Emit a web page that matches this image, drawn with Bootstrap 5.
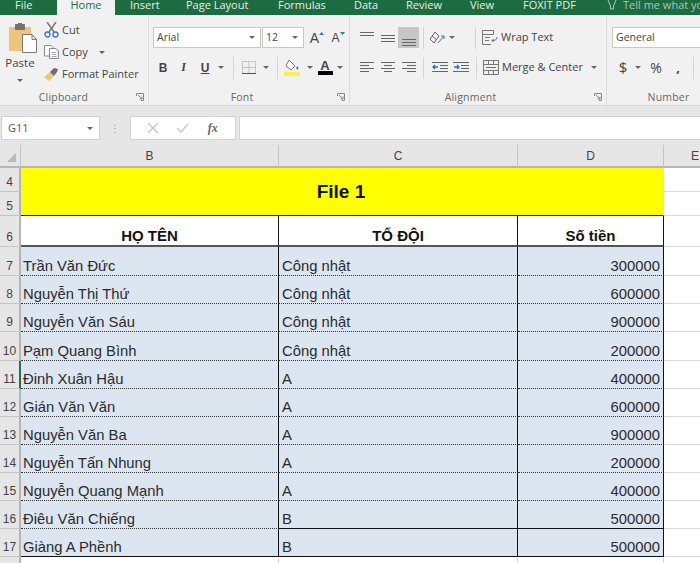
<!DOCTYPE html>
<html lang="vi">

<head>
  <meta charset="UTF-8" />
  <meta name="viewport" content="width=device-width, initial-scale=1" />
  <title>File 1</title>
  <link href="https://cdn.jsdelivr.net/npm/bootstrap@5.3.3/dist/css/bootstrap.min.css" rel="stylesheet">
  <style>
    body { width: 700px; height: 563px; overflow: hidden; background: #fff; font-family: "Open Sans", "Liberation Sans", sans-serif; font-size: 11px; color: #444; }

    /* spacing helpers */
    .sw-6 { width: 6px; } .sw-10 { width: 10px; } .sw-12 { width: 12px; } .sw-14 { width: 14px; } .sw-16 { width: 16px; }
    .sw-18 { width: 18px; } .sw-20 { width: 20px; } .sw-21 { width: 21px; } .sw-22 { width: 22px; } .sw-24 { width: 24px; }
    .sw-25 { width: 25px; } .sw-26 { width: 26px; } .sw-29 { width: 29px; } .sw-42 { width: 42px; } .sw-108 { width: 108px; } .sw-110 { width: 110px; }
    .ml-1 { margin-left: 1px; } .ml-3 { margin-left: 3px; } .ml-4 { margin-left: 4px; } .ml-6 { margin-left: 6px; } .ml-7 { margin-left: 7px; } .ml-8 { margin-left: 8px; } .ml-20 { margin-left: 20px; }

    /* tabs */
    .tabbar { height: 15px; background: #1d6b40; color: #e4efe8; overflow: hidden; font-size: 11px; line-height: 10px; }
    .tabbar span { display: block; flex: none; white-space: nowrap; }
    .tab-file { margin-left: 15px; width: 42px; }
    .tab-home { background: #f1f1f1; color: #1d6b40; width: 58px; height: 15px; text-align: center; }
    .tab-insert { margin-left: 15px; width: 56px; }
    .tab-layout { width: 92px; }
    .tab-formulas { width: 76px; }
    .tab-data { width: 52px; }
    .tab-review { width: 64px; }
    .tab-view { width: 53px; }
    .tab-foxit { width: 84px; }
    .tab-tell { color: #a9c8b6; }
    .tab-tell svg { margin-right: 6px; }

    /* ribbon */
    .ribbon { height: 91px; background: #f1f1f1; border-bottom: 1px solid #d8d8d8; }
    .rgroup { flex: none; height: 90px; border-right: 1px solid #dcdcdc; position: relative; }
    .rg-clip { width: 149px; }
    .rg-font { width: 201px; padding: 12px 0 0 4px; }
    .rg-align { width: 257px; padding: 12px 0 0 5px; }
    .rg-num { flex: 1; padding: 12px 0 0 5px; border-right: 0; overflow: hidden; }
    .rlabel { position: absolute; left: 0; right: 0; top: 75px; text-align: center; color: #666; font-size: 10.5px; line-height: 14px; letter-spacing: .2px; }
    .lb-clip { padding-right: 21px; }
    .lb-font { padding-right: 14px; }
    .lb-align { padding-right: 15px; }
    .lb-num { padding-left: 30px; }
    .launch { position: absolute; right: 4px; top: 78px; display: block; }
    .caret-d { flex: none; width: 0; height: 0; border: 3px solid transparent; border-top-color: #666; border-bottom: 0; }
    .sep { flex: none; width: 1px; height: 22px; background: #d4d4d4; }
    .slot { flex: none; height: 21px; display: flex; align-items: center; justify-content: center; color: #444; }
    .combo { flex: none; height: 21px; background: #fff; border: 1px solid #c8c8c8; padding: 0 5px 0 3px; color: #444; font-size: 10.5px; }
    .combo-size { margin-left: 1px; }
    .grow-a { font: 14px "Liberation Sans", sans-serif; }
    .shrink-a { font: 12px "Liberation Sans", sans-serif; }
    .rrow { height: 21px; flex-wrap: nowrap; }
    .rrow2 { margin-top: 9px; }
    .paste-col { width: 40px; padding-top: 8px; color: #444; }
    .paste-ico { margin-left: 3px; }
    .paste-txt { font-size: 11.5px; line-height: 16px; }
    .clip-col { font-size: 11px; padding-top: 4px; margin-left: 4px; color: #444; white-space: nowrap; }
    .clip-col > div { height: 22px; gap: 3px; }
    .fmt-b { font: bold 12px "Liberation Sans", sans-serif; color: #444; }
    .fmt-i { font-family: "Liberation Serif", serif; font-style: italic; }
    .font-a { font-size: 13px; line-height: 11px; }
    .font-bar { display: block; width: 15px; height: 4px; background: #000; }
    .align-on { background: #c6c6c6; }
    .wrap-txt { font-size: 11px; color: #444; white-space: nowrap; align-self: center; }
    .num-dollar { font-size: 15px; }
    .num-pct { font-size: 14px; }
    .num-comma { font-size: 13px; font-weight: bold; }

    /* formula bar */
    .fbar { height: 39px; background: #e6e6e6; padding: 10px 0 0 1px; }
    .fbox { flex: none; height: 24px; background: #fff; border: 1px solid #d2d2d2; color: #555; }
    .fname { width: 99px; padding: 0 6px; font-size: 11px; }
    .fdots { flex: none; width: 30px; text-align: center; color: #9a9a9a; font-size: 10px; line-height: 24px; }
    .ffn { width: 106px; }
    .fx-txt { font: italic bold 12px "Liberation Serif", serif; color: #666; }
    .finput { flex: 1; margin-left: 3px; border-right: 0; }

    /* sheet */
    .sheet { table-layout: fixed; border-collapse: separate; border-spacing: 0; width: 700px; font-family: "Liberation Sans", Arial, sans-serif; font-size: 14.800px; color: #2b2b2b; }
    .sheet td { padding: 0; overflow: hidden; white-space: nowrap; font-weight: normal; }
    .c-rh { width: 21px; } .c-b { width: 258px; } .c-c { width: 239px; } .c-d { width: 146px; } .c-e { width: 36px; }
    .col-head td { height: 23px; background: #e6e6e6; border-right: 1px solid #c4c4c4; border-bottom: 2px solid #b5b5b5; text-align: center; font-size: 12px; color: #444; line-height: 20px; }
    .col-head .col-e { border-right: 0; text-align: left; padding-left: 27px; }
    .sheet .rh { background: #e6e6e6; border-right: 2px solid #b5b5b5; border-bottom: 1px solid #c4c4c4; text-align: center; vertical-align: bottom; font-size: 12px; line-height: 18px; color: #444; }
    .sheet .rh.rh-on { border-right-color: #217346; }
    .sheet .rh.rh-cut { vertical-align: top; padding-top: 4px; border-bottom: 0; }
    .corner { position: relative; }
    .corner svg { position: absolute; left: 7px; top: 8px; }
    .r24 { height: 24px; }
    .r31 { height: 31px; }
    .r28 { height: 28px; }
    .r29 { height: 29px; }
    .r-last { height: 7px; }
    .sheet .title-cell { background: #ff0; border-bottom: 1px solid #111; text-align: center; font-weight: bold; font-size: 19px; color: #111; border-right: 1px solid #ddd; padding: 1px 2px 0 0; }
    .sheet .head-cell { font-weight: bold; text-align: center; vertical-align: bottom; font-size: 15px; color: #111; background: #fff; border-bottom: 2px solid #555; border-right: 1px solid #111; line-height: 18px; }
    .sheet .cell { background: #dce6f1; vertical-align: bottom; line-height: 17px; padding: 0 3px; border-bottom: 1px dotted #333; border-right: 1px solid #111; }
    .sheet .cell-name { padding-left: 2px; }
    .sheet .cell-b { border-bottom: 1px solid #111; }
    .num { text-align: right; }
    .grid-e { background: #fff; border-bottom: 1px solid #d8d8d8; }
    .grid-y { background: #fff; border-right: 1px solid #d8d8d8; }
  </style>
</head>

<body>
  <!-- tabs -->
  <div class="tabbar d-flex">
    <span class="tab-file">File</span>
    <span class="tab-home">Home</span>
    <span class="tab-insert">Insert</span>
    <span class="tab-layout">Page Layout</span>
    <span class="tab-formulas">Formulas</span>
    <span class="tab-data">Data</span>
    <span class="tab-review">Review</span>
    <span class="tab-view">View</span>
    <span class="tab-foxit">FOXIT PDF</span>
    <span class="tab-tell">
      <svg width="10" height="12" viewBox="0 0 10 12" fill="none" stroke="#a9c8b6"><path d="M1 0 3.500 6V9H6.500V6L9 0"/></svg>Tell me what you want to do
    </span>
  </div>

  <!-- ribbon -->
  <div class="ribbon d-flex">
    <div class="rgroup rg-clip d-flex">
      <div class="paste-col d-flex flex-column align-items-center">
        <svg class="paste-ico" width="30" height="32" viewBox="0 0 30 32">
          <rect x="2" y="4" width="22" height="24" fill="#eec37c"/>
          <rect x="8" y="1" width="10" height="6" fill="#77736c"/>
          <rect x="11" y="0" width="4" height="3" fill="#77736c"/>
          <path d="M15.500 11.500H25L29.500 16.500V29.500H15.500Z" fill="#fff" stroke="#777"/>
          <path d="M25 11.500V16.500H29.500" fill="none" stroke="#777"/>
        </svg>
        <div class="paste-txt">Paste</div>
        <div class="caret-d mt-2"></div>
      </div>
      <div class="clip-col">
        <div class="d-flex align-items-center">
          <svg width="15" height="16" viewBox="0 0 15 16" fill="none">
            <path d="M3 0 10 10M12 0 5 10" stroke="#777" stroke-width="1.500"/>
            <circle cx="3.500" cy="12.500" r="2.500" stroke="#3f75b5" stroke-width="1.300"/>
            <circle cx="11.500" cy="12.500" r="2.500" stroke="#3f75b5" stroke-width="1.300"/>
          </svg>
          <span>Cut</span>
        </div>
        <div class="d-flex align-items-center">
          <svg width="15" height="14" viewBox="0 0 15 14" fill="#fff" stroke="#7a8ba0">
            <path d="M.5.500H7L9 2.500V11H.5Z"/>
            <path d="M5.500 3.500H12L14.500 6V13.500H5.500Z"/>
            <path d="M7.500 7.500H12.500M7.500 9.500H12.500M7.500 11.500H12.500" stroke="#aaa"/>
          </svg>
          <span>Copy</span>
          <span class="caret-d ms-2"></span>
        </div>
        <div class="d-flex align-items-center">
          <svg width="15" height="13" viewBox="0 0 15 13">
            <path d="M0 9 6 4 10 8 5 13Z" fill="#eec37c"/>
            <path d="M6 4 10 0 14 1 13 4 10 8Z" fill="#6d6d6d"/>
          </svg>
          <span>Format Painter</span>
        </div>
      </div>
      <div class="rlabel lb-clip">Clipboard</div>
      <svg class="launch" width="8" height="8" viewBox="0 0 8 8" fill="none" stroke="#888"><path d="M.5 3V.5H7.500V7.500H5M2 2 6 6M3.500 6H6V3.500"/></svg>
    </div>

    <div class="rgroup rg-font">
      <div class="d-flex rrow">
        <div class="combo sw-108 d-flex align-items-center justify-content-between">Arial<span class="caret-d"></span></div>
        <div class="combo combo-size sw-42 d-flex align-items-center justify-content-between">12<span class="caret-d"></span></div>
        <div class="slot sw-26 grow-a">A<svg width="5" height="3" class="mb-2"><path d="M0 3 2.500 0 5 3Z" fill="#3f75b5"/></svg></div>
        <div class="slot sw-16 shrink-a">A<svg width="5" height="3" class="mb-2"><path d="M0 0 2.500 3 5 0Z" fill="#3f75b5"/></svg></div>
      </div>
      <div class="d-flex rrow rrow2 align-items-center">
        <div class="slot sw-20 fmt-b">B</div>
        <div class="slot sw-21 fmt-b fmt-i">I</div>
        <div class="slot sw-22 fmt-b text-decoration-underline">U</div>
        <div class="slot sw-10"><span class="caret-d"></span></div>
        <div class="sep ml-7"></div>
        <div class="slot sw-29">
          <svg width="14" height="13" viewBox="0 0 14 13" fill="none" stroke="#9a9a9a" stroke-dasharray="1 1"><path d="M.5.500H13.500V12.500H.5ZM7 .5V12.500M.5 6.500H13.500"/><path d="M0 12.500H14" stroke="#555" stroke-dasharray="none"/></svg>
        </div>
        <div class="slot sw-6"><span class="caret-d"></span></div>
        <div class="sep ml-8"></div>
        <div class="slot sw-29">
          <svg width="17" height="17" viewBox="0 0 17 17">
            <path d="M5 1 11 7 7 11 2 7Z" fill="#fff" stroke="#777"/>
            <path d="M13 7C15 9 15 10 13.500 10.500 12 10 12 9 13 7Z" fill="#3f75b5"/>
            <rect x="0" y="13" width="16" height="4" fill="#ffee44"/>
          </svg>
        </div>
        <div class="slot sw-6"><span class="caret-d"></span></div>
        <div class="slot sw-24 flex-column">
          <span class="fmt-b font-a">A</span>
          <span class="font-bar"></span>
        </div>
        <div class="slot sw-6"><span class="caret-d"></span></div>
      </div>
      <div class="rlabel lb-font">Font</div>
      <svg class="launch" width="8" height="8" viewBox="0 0 8 8" fill="none" stroke="#888"><path d="M.5 3V.5H7.500V7.500H5M2 2 6 6M3.500 6H6V3.500"/></svg>
    </div>

    <div class="rgroup rg-align">
      <div class="d-flex rrow">
        <div class="slot sw-21 ml-1"><svg width="14" height="21" viewBox="0 0 14 21" stroke="#666"><path d="M0 5.500H14M0 8.500H14"/></svg></div>
        <div class="slot sw-21"><svg width="14" height="21" viewBox="0 0 14 21" stroke="#666"><path d="M0 8.500H14M0 11.500H14M0 14.500H14"/></svg></div>
        <div class="slot sw-21 align-on"><svg width="14" height="21" viewBox="0 0 14 21" stroke="#666"><path d="M0 12.500H14M0 15.500H14M0 18.500H14"/></svg></div>
        <div class="sep ml-4"></div>
        <div class="slot sw-25">
          <svg width="16" height="14" viewBox="0 0 16 14" fill="none" stroke="#666"><path d="M1 8 6 1 10 5 5 12ZM3 5 8 9"/><path d="M9 12 15 5M12 5H15V8" stroke="#3f75b5"/></svg>
        </div>
        <div class="slot sw-6"><span class="caret-d"></span></div>
        <div class="sep ml-20"></div>
        <div class="slot sw-22 ml-3">
          <svg width="16" height="15" viewBox="0 0 16 15" fill="none" stroke="#777"><path d="M.5.500H11.500V4.500H.5ZM.5 4.500V14.500H9M3 7.500H8M3 10.500H7"/><path d="M15 7C15 10 13 10.500 10 10.500M11.500 9 10 10.500 11.500 12" stroke="#3f75b5"/></svg>
        </div>
        <span class="wrap-txt">Wrap Text</span>
      </div>
      <div class="d-flex rrow rrow2">
        <div class="slot sw-21 ml-1"><svg width="14" height="11" viewBox="0 0 14 11" stroke="#666"><path d="M0 .5H14M0 3.500H9M0 6.500H14M0 9.500H9"/></svg></div>
        <div class="slot sw-21"><svg width="14" height="11" viewBox="0 0 14 11" stroke="#666"><path d="M0 .5H14M3 3.500H11M0 6.500H14M3 9.500H11"/></svg></div>
        <div class="slot sw-21"><svg width="14" height="11" viewBox="0 0 14 11" stroke="#666"><path d="M0 .5H14M5 3.500H14M0 6.500H14M5 9.500H14"/></svg></div>
        <div class="sep ml-4"></div>
        <div class="slot sw-18 ml-7">
          <svg width="16" height="12" viewBox="0 0 16 12" fill="none" stroke="#666"><path d="M0 .5H16M8 3.500H16M8 6.500H16M0 9.500H16"/><path d="M6 5H1M3 3 1 5 3 7" stroke="#2a6fb5" stroke-width="1.300"/></svg>
        </div>
        <div class="slot sw-18 ml-3">
          <svg width="16" height="12" viewBox="0 0 16 12" fill="none" stroke="#666"><path d="M0 .5H16M8 3.500H16M8 6.500H16M0 9.500H16"/><path d="M1 5H6M4 3 6 5 4 7" stroke="#2a6fb5" stroke-width="1.300"/></svg>
        </div>
        <div class="sep ml-6"></div>
        <div class="slot sw-22 ml-3">
          <svg width="16" height="15" viewBox="0 0 16 15" fill="none" stroke="#777"><path d="M.5.500H15.500V14.500H.5ZM.5 4.500H15.500M.5 10.500H15.500M5.500.5V4.500M10.500.5V4.500M5.500 10.500V14.500M10.500 10.500V14.500"/><path d="M3 7.500H13" stroke="#3f75b5"/></svg>
        </div>
        <span class="wrap-txt">Merge &amp; Center</span>
        <span class="caret-d align-self-center ms-2"></span>
      </div>
      <div class="rlabel lb-align">Alignment</div>
      <svg class="launch" width="8" height="8" viewBox="0 0 8 8" fill="none" stroke="#888"><path d="M.5 3V.5H7.500V7.500H5M2 2 6 6M3.500 6H6V3.500"/></svg>
    </div>

    <div class="rgroup rg-num">
      <div class="d-flex rrow">
        <div class="combo sw-110 d-flex align-items-center">General</div>
      </div>
      <div class="d-flex rrow rrow2 align-items-center">
        <div class="slot sw-14 ms-1 num-dollar">$</div>
        <div class="slot sw-16"><span class="caret-d"></span></div>
        <div class="slot sw-20 num-pct">%</div>
        <div class="slot sw-18 ml-3 num-comma">,</div>
        <div class="sep ml-6"></div>
      </div>
      <div class="rlabel lb-num">Number</div>
    </div>
  </div>

  <!-- formula bar -->
  <div class="fbar d-flex">
    <div class="fbox fname d-flex align-items-center justify-content-between">G11<span class="caret-d"></span></div>
    <div class="fdots">⋮</div>
    <div class="fbox ffn d-flex align-items-center justify-content-around px-2">
      <svg width="10" height="10" viewBox="0 0 10 10" stroke="#c4c4c4" stroke-width="1.300"><path d="M0 0 10 10M10 0 0 10"/></svg>
      <svg width="13" height="10" viewBox="0 0 13 10" fill="none" stroke="#c4c4c4" stroke-width="1.300"><path d="M1 5 5 9 12 1"/></svg>
      <span class="fx-txt">fx</span>
    </div>
    <div class="fbox finput"></div>
  </div>

  <!-- sheet -->
  <table class="sheet">
    <colgroup>
      <col class="c-rh"><col class="c-b"><col class="c-c"><col class="c-d"><col class="c-e">
    </colgroup>
    <tr class="col-head">
      <td class="corner"><svg width="9" height="9" viewBox="0 0 9 9"><path d="M9 0V9H0Z" fill="#b9b9b9"/></svg></td>
      <td>B</td><td>C</td><td>D</td><td class="col-e">E</td>
    </tr>
    <tr class="r24">
      <td class="rh">4</td>
      <td class="title-cell" colspan="3" rowspan="2">File 1</td>
      <td class="grid-e"></td>
    </tr>
    <tr class="r24"><td class="rh">5</td><td class="grid-e"></td></tr>
    <tr class="r31">
      <td class="rh">6</td>
      <td class="head-cell">HỌ TÊN</td><td class="head-cell">TỔ ĐỘI</td><td class="head-cell">Số tiền</td>
      <td class="grid-e"></td>
    </tr>
    <tr class="r29"><td class="rh">7</td><td class="cell cell-name">Trần Văn Đức</td><td class="cell">Công nhật</td><td class="cell num">300000</td><td class="grid-e"></td></tr>
    <tr class="r28"><td class="rh">8</td><td class="cell cell-name">Nguyễn Thị Thứ</td><td class="cell">Công nhật</td><td class="cell num">600000</td><td class="grid-e"></td></tr>
    <tr class="r28"><td class="rh">9</td><td class="cell cell-name">Nguyễn Văn Sáu</td><td class="cell">Công nhật</td><td class="cell num">900000</td><td class="grid-e"></td></tr>
    <tr class="r29"><td class="rh">10</td><td class="cell cell-name">Pạm Quang Bình</td><td class="cell">Công nhật</td><td class="cell num">200000</td><td class="grid-e"></td></tr>
    <tr class="r28"><td class="rh rh-on">11</td><td class="cell cell-name">Đinh Xuân Hậu</td><td class="cell">A</td><td class="cell num">400000</td><td class="grid-e"></td></tr>
    <tr class="r28"><td class="rh">12</td><td class="cell cell-name">Gián Văn Văn</td><td class="cell">A</td><td class="cell num">600000</td><td class="grid-e"></td></tr>
    <tr class="r28"><td class="rh">13</td><td class="cell cell-name">Nguyễn Văn Ba</td><td class="cell">A</td><td class="cell num">900000</td><td class="grid-e"></td></tr>
    <tr class="r28"><td class="rh">14</td><td class="cell cell-name">Nguyễn Tấn Nhung</td><td class="cell">A</td><td class="cell num">200000</td><td class="grid-e"></td></tr>
    <tr class="r28"><td class="rh">15</td><td class="cell cell-name">Nguyễn Quang Mạnh</td><td class="cell">A</td><td class="cell num">400000</td><td class="grid-e"></td></tr>
    <tr class="r28"><td class="rh">16</td><td class="cell cell-name">Điêu Văn Chiếng</td><td class="cell cell-b">B</td><td class="cell cell-b num">500000</td><td class="grid-e"></td></tr>
    <tr class="r28"><td class="rh">17</td><td class="cell cell-name cell-b">Giàng A Phềnh</td><td class="cell cell-b">B</td><td class="cell cell-b num">500000</td><td class="grid-e"></td></tr>
    <tr class="r-last"><td class="rh rh-cut">18</td><td class="grid-y"></td><td class="grid-y"></td><td class="grid-y"></td><td></td></tr>
  </table>

  <script src="https://cdn.jsdelivr.net/npm/bootstrap@5.3.3/dist/js/bootstrap.bundle.min.js"></script>
</body>

</html>
